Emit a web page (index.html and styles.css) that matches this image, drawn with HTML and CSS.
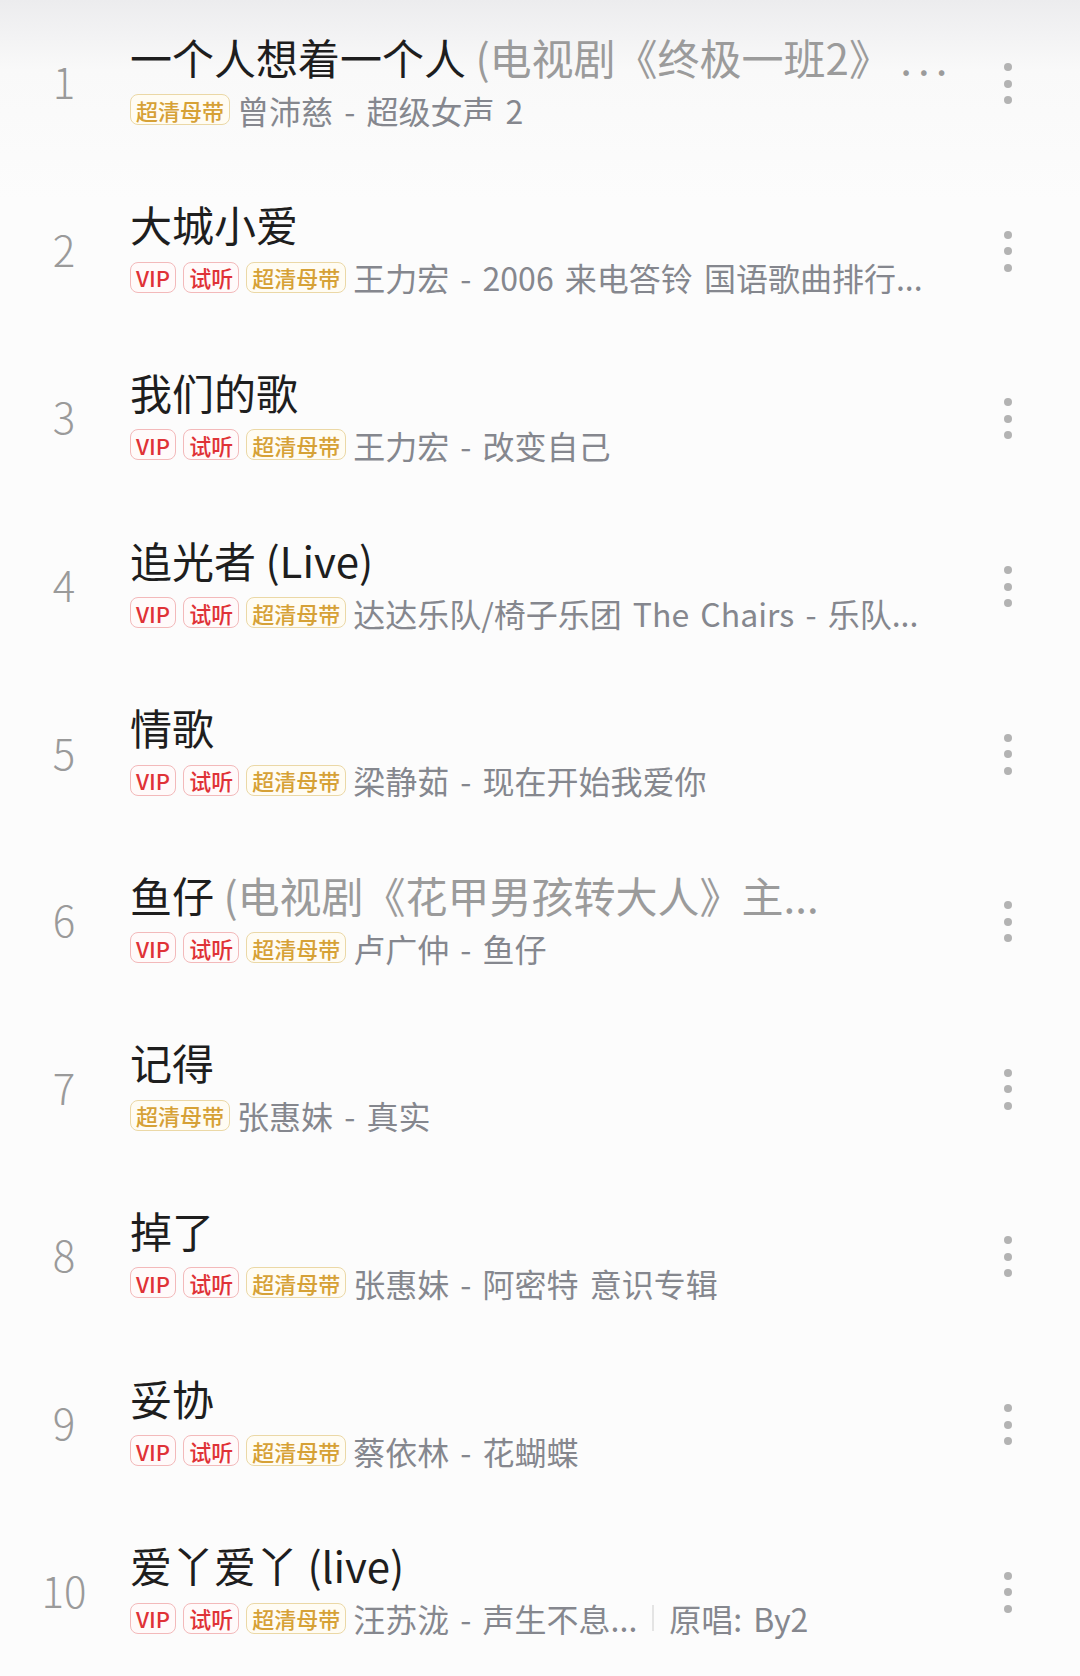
FILE: index.html
```html
<!DOCTYPE html>
<html lang="zh-CN">
<head>
    <meta charset="UTF-8">
    <meta name="viewport" content="width=device-width, initial-scale=1.0">
    <title>歌曲列表</title>
    <link rel="stylesheet" href="styles.css">
</head>
<body>
    <ul class="songs">
        <li class="song">
            <div class="num">1</div>
            <div class="info">
                <div class="title">一个人想着一个人 <span class="extra">(电视剧《终极一班2》 <span class="dots">...</span></span></div>
                <div class="meta">
                    <span class="tag gold">超清母带</span>
                    <span class="desc">曾沛慈 - 超级女声 2</span>
                </div>
            </div>
            <div class="more"><i></i><i></i><i></i></div>
        </li>
        <li class="song">
            <div class="num">2</div>
            <div class="info">
                <div class="title">大城小爱</div>
                <div class="meta">
                    <span class="tag red">VIP</span>
                    <span class="tag red">试听</span>
                    <span class="tag gold">超清母带</span>
                    <span class="desc">王力宏 - 2006 来电答铃 国语歌曲排行...</span>
                </div>
            </div>
            <div class="more"><i></i><i></i><i></i></div>
        </li>
        <li class="song">
            <div class="num">3</div>
            <div class="info">
                <div class="title">我们的歌</div>
                <div class="meta">
                    <span class="tag red">VIP</span>
                    <span class="tag red">试听</span>
                    <span class="tag gold">超清母带</span>
                    <span class="desc">王力宏 - 改变自己</span>
                </div>
            </div>
            <div class="more"><i></i><i></i><i></i></div>
        </li>
        <li class="song">
            <div class="num">4</div>
            <div class="info">
                <div class="title">追光者 (Live)</div>
                <div class="meta">
                    <span class="tag red">VIP</span>
                    <span class="tag red">试听</span>
                    <span class="tag gold">超清母带</span>
                    <span class="desc">达达乐队/椅子乐团 The Chairs - 乐队...</span>
                </div>
            </div>
            <div class="more"><i></i><i></i><i></i></div>
        </li>
        <li class="song">
            <div class="num">5</div>
            <div class="info">
                <div class="title">情歌</div>
                <div class="meta">
                    <span class="tag red">VIP</span>
                    <span class="tag red">试听</span>
                    <span class="tag gold">超清母带</span>
                    <span class="desc">梁静茹 - 现在开始我爱你</span>
                </div>
            </div>
            <div class="more"><i></i><i></i><i></i></div>
        </li>
        <li class="song">
            <div class="num">6</div>
            <div class="info">
                <div class="title">鱼仔 <span class="extra">(电视剧《花甲男孩转大人》主...</span></div>
                <div class="meta">
                    <span class="tag red">VIP</span>
                    <span class="tag red">试听</span>
                    <span class="tag gold">超清母带</span>
                    <span class="desc">卢广仲 - 鱼仔</span>
                </div>
            </div>
            <div class="more"><i></i><i></i><i></i></div>
        </li>
        <li class="song">
            <div class="num">7</div>
            <div class="info">
                <div class="title">记得</div>
                <div class="meta">
                    <span class="tag gold">超清母带</span>
                    <span class="desc">张惠妹 - 真实</span>
                </div>
            </div>
            <div class="more"><i></i><i></i><i></i></div>
        </li>
        <li class="song">
            <div class="num">8</div>
            <div class="info">
                <div class="title">掉了</div>
                <div class="meta">
                    <span class="tag red">VIP</span>
                    <span class="tag red">试听</span>
                    <span class="tag gold">超清母带</span>
                    <span class="desc">张惠妹 - 阿密特 意识专辑</span>
                </div>
            </div>
            <div class="more"><i></i><i></i><i></i></div>
        </li>
        <li class="song">
            <div class="num">9</div>
            <div class="info">
                <div class="title">妥协</div>
                <div class="meta">
                    <span class="tag red">VIP</span>
                    <span class="tag red">试听</span>
                    <span class="tag gold">超清母带</span>
                    <span class="desc">蔡依林 - 花蝴蝶</span>
                </div>
            </div>
            <div class="more"><i></i><i></i><i></i></div>
        </li>
        <li class="song">
            <div class="num">10</div>
            <div class="info">
                <div class="title">爱丫爱丫 (live)</div>
                <div class="meta">
                    <span class="tag red">VIP</span>
                    <span class="tag red">试听</span>
                    <span class="tag gold">超清母带</span>
                    <span class="desc">汪苏泷 - 声生不息...</span>
                    <span class="sep"></span>
                    <span class="desc">原唱: By2</span>
                </div>
            </div>
            <div class="more"><i></i><i></i><i></i></div>
        </li>
    </ul>
</body>
</html>
```

FILE: styles.css
```css
body {
    margin: 0;
    background: linear-gradient(#ececee 0, #f9f9f9 70px, #fcfcfc 200px, #fcfcfc 100%);
    font-family: "Noto Sans CJK SC", "Noto Sans", sans-serif;
    color: #222;
}

.songs {
    list-style: none;
    margin: 0;
    padding: 0;
}

.song {
    height: 167.6px;
    display: flex;
    align-items: center;
}

.num {
    width: 128px;
    padding: 0 2px 6px 0;
    text-align: center;
    font-size: 42px;
    color: #9a9a9a;
    font-weight: 300;
}

.info {
    flex: 1;
    min-width: 0;
    display: flex;
    flex-direction: column;
    gap: 10px;
    padding-bottom: 10px;
}

.title {
    font-size: 42px;
    line-height: 52px;
    color: #1e1e1e;
    white-space: nowrap;
}

.title .extra {
    color: #9b9b9b;
}

.title .dots {
    letter-spacing: 6px;
}

.meta {
    display: flex;
    align-items: center;
    gap: 7px;
    height: 34px;
    white-space: nowrap;
}

.tag {
    height: 31px;
    box-sizing: border-box;
    display: inline-flex;
    align-items: center;
    padding: 0 5px;
    border-radius: 8px;
    font-size: 22px;
    font-weight: 500;
    border: 1.5px solid;
}

.tag.red {
    color: #df3237;
    border-color: #f3b9ba;
    background: #fffafa;
}

.tag.gold {
    color: #d6a136;
    border-color: #ebd8a6;
    background: #fffcf3;
}

.desc {
    font-size: 32px;
    color: #85878e;
    word-spacing: 4px;
}

.sep {
    width: 2px;
    height: 26px;
    background: #e4e4e4;
    margin: 0 8px;
}

.more {
    width: 116px;
    margin-right: 14px;
    display: flex;
    flex-direction: column;
    align-items: center;
    gap: 8.5px;
}

.more i {
    width: 8px;
    height: 8px;
    border-radius: 50%;
    background: #b3b3b3;
}
```
